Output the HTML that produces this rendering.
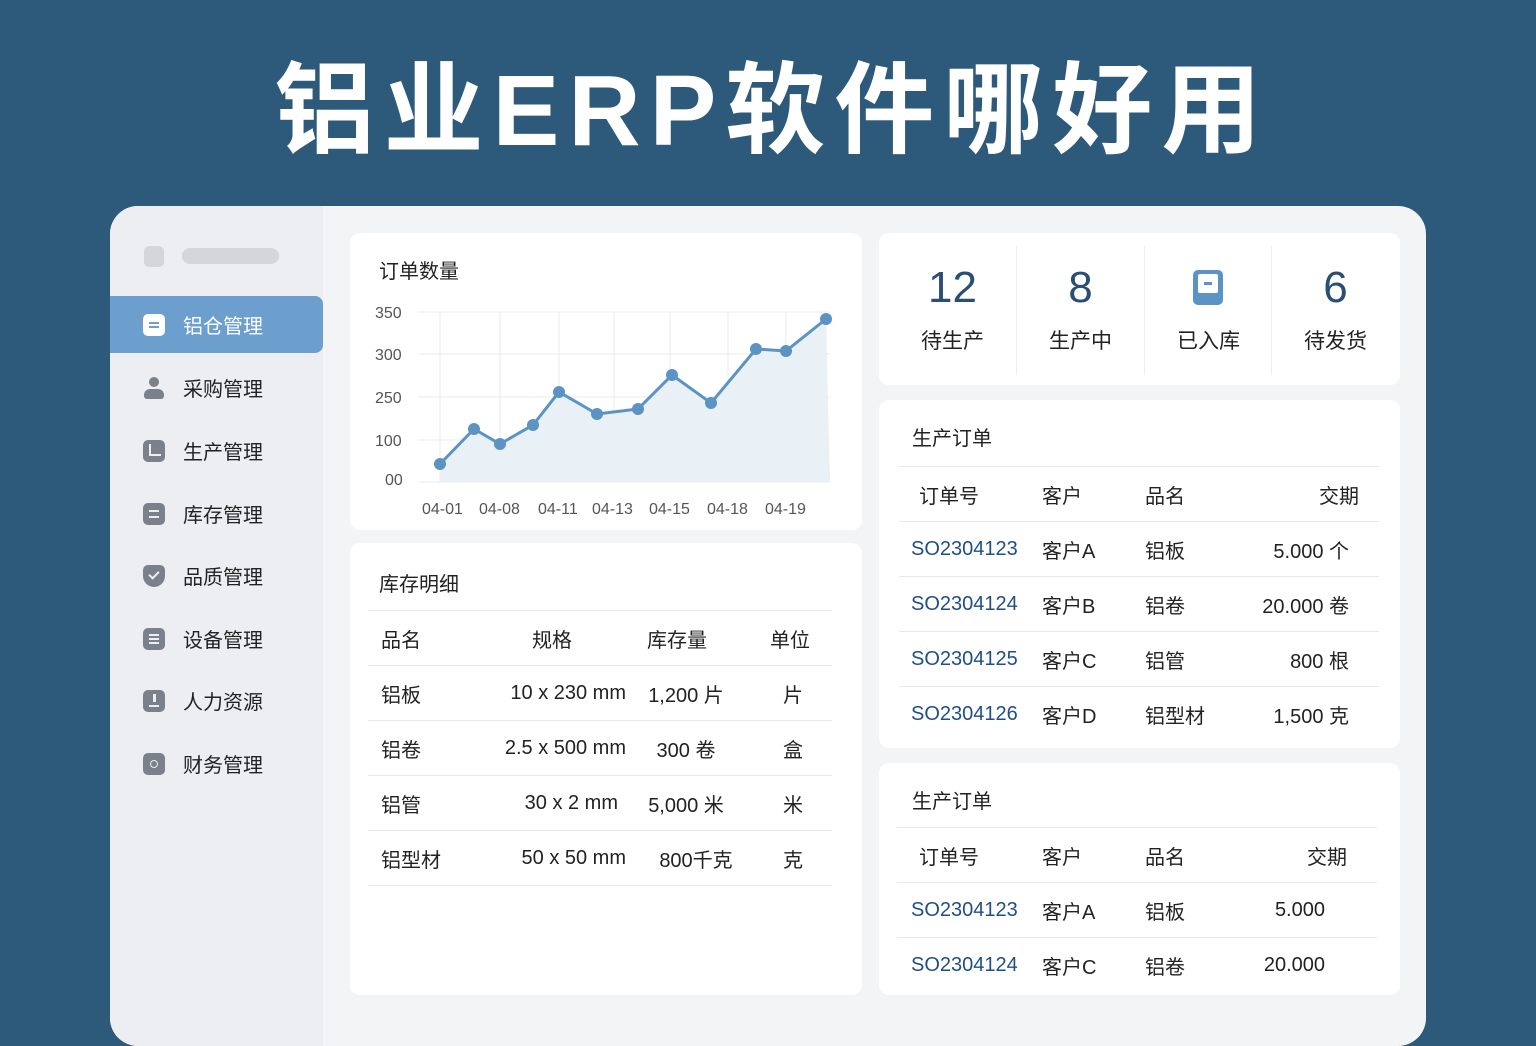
<!DOCTYPE html>
<html><head><meta charset="utf-8"><style>
*{margin:0;padding:0;box-sizing:border-box}
body{width:1536px;height:1024px;overflow:hidden;background:#2d5a7b;font-family:"Liberation Sans","Noto Sans CJK SC",sans-serif;position:relative;color:#222}
.title{position:absolute;top:46px;left:0;width:1536px;text-align:center;color:#fff;font-size:100px;font-weight:bold;letter-spacing:9px;line-height:130px;padding-left:9px}
.panel{position:absolute;left:110px;top:206px;width:1316px;height:840px;background:#f3f4f6;border-radius:28px;overflow:hidden}
.side{position:absolute;left:0;top:0;width:213px;height:100%;background:#eceef1}
.card{position:absolute;background:#fff;border-radius:10px}
.abs{position:absolute}
.nav{position:absolute;left:0;width:213px;height:57px;display:flex;align-items:center;font-size:20px;color:#222}
.nav .ic{width:22px;height:22px;border-radius:5px;background:#7b818a;margin-left:33px;margin-right:18px;position:relative}
.nav .ic i{position:absolute;left:6px;width:10px;height:2px;background:#eceef1}
.nav.on{background:#6c9fce;color:#fff;border-radius:0 8px 8px 0}
.nav.on .ic{background:#fff}
table{border-collapse:collapse;font-size:20px;table-layout:fixed}
td{height:55px;border-bottom:1px solid #e6e8eb;white-space:nowrap}
.blue{color:#1f4f86}
.num{font-size:44px;color:#2b4f73;text-align:center;width:127px;top:30px;position:absolute}
</style></head><body>
<div class="title">铝业ERP软件哪好用</div>
<div class="panel">
 <div class="side">
  <div class="abs" style="left:34px;top:40px;width:20px;height:21px;border-radius:5px;background:#d4d6d9"></div>
  <div class="abs" style="left:72px;top:42px;width:97px;height:16px;border-radius:8px;background:#d4d6d9"></div>
  <div class="nav on" style="top:90px"><div class="ic"><i style="top:8px;background:#6c9fce"></i><i style="top:12px;background:#6c9fce"></i></div>铝仓管理</div>
  <div class="nav" style="top:153px"><div class="ic" style="background:none"><div class="abs" style="left:6px;top:0;width:10px;height:10px;border-radius:50%;background:#7b818a"></div><div class="abs" style="left:1px;top:12px;width:20px;height:10px;border-radius:6px 6px 3px 3px;background:#7b818a"></div></div>采购管理</div>
  <div class="nav" style="top:216px"><div class="ic"><div class="abs" style="left:6px;top:4px;width:12px;height:12px;border-left:2px solid #eceef1;border-bottom:2px solid #eceef1"></div></div>生产管理</div>
  <div class="nav" style="top:279px"><div class="ic"><i style="top:7px"></i><i style="top:13px"></i></div>库存管理</div>
  <div class="nav" style="top:341px"><div class="ic" style="border-radius:5px 5px 11px 11px"><div class="abs" style="left:6px;top:6px;width:10px;height:6px;border-left:2px solid #eceef1;border-bottom:2px solid #eceef1;transform:rotate(-45deg)"></div></div>品质管理</div>
  <div class="nav" style="top:404px"><div class="ic"><i style="top:6px"></i><i style="top:10px"></i><i style="top:14px"></i></div>设备管理</div>
  <div class="nav" style="top:466px"><div class="ic"><div class="abs" style="left:10px;top:4px;width:3px;height:8px;background:#eceef1"></div><i style="top:15px"></i></div>人力资源</div>
  <div class="nav" style="top:529px"><div class="ic"><div class="abs" style="left:7px;top:7px;width:8px;height:8px;border:1.5px solid #eceef1;border-radius:50%"></div></div>财务管理</div>
 </div>
 <div class="card" style="left:240px;top:27px;width:512px;height:297px">
  <div class="abs" style="left:29px;top:22px;font-size:20px">订单数量</div>
  <svg class="abs" style="left:0;top:0" width="512" height="297">
   <g stroke="#e8ebee" stroke-width="1">
    <line x1="68" y1="79" x2="480" y2="79"/><line x1="68" y1="121" x2="480" y2="121"/><line x1="68" y1="164" x2="480" y2="164"/><line x1="68" y1="207" x2="480" y2="207"/><line x1="68" y1="249" x2="480" y2="249"/>
    <line x1="90" y1="79" x2="90" y2="249"/><line x1="150" y1="79" x2="150" y2="249"/><line x1="209" y1="79" x2="209" y2="249"/><line x1="264" y1="79" x2="264" y2="249"/><line x1="320" y1="79" x2="320" y2="249"/><line x1="378" y1="79" x2="378" y2="249"/><line x1="436" y1="79" x2="436" y2="249"/>
   </g>
   <polygon fill="#e9f0f6" points="90,231 124,196 150,211 183,192 209,159 247,181 288,176 322,142 361,170 406,116 436,118 476,86 480,249 90,249"/>
   <polyline fill="none" stroke="#5b93c4" stroke-width="3" points="90,231 124,196 150,211 183,192 209,159 247,181 288,176 322,142 361,170 406,116 436,118 476,86"/>
   <g fill="#5b93c4"><circle cx="90" cy="231" r="6"/><circle cx="124" cy="196" r="6"/><circle cx="150" cy="211" r="6"/><circle cx="183" cy="192" r="6"/><circle cx="209" cy="159" r="6"/><circle cx="247" cy="181" r="6"/><circle cx="288" cy="176" r="6"/><circle cx="322" cy="142" r="6"/><circle cx="361" cy="170" r="6"/><circle cx="406" cy="116" r="6"/><circle cx="436" cy="118" r="6"/><circle cx="476" cy="86" r="6"/></g>
   <g font-size="16" fill="#555" font-family="Liberation Sans,sans-serif">
    <text x="25" y="85">350</text><text x="25" y="127">300</text><text x="25" y="170">250</text><text x="25" y="213">100</text><text x="35" y="252">00</text>
    <text x="72" y="281">04-01</text><text x="129" y="281">04-08</text><text x="188" y="281">04-11</text><text x="242" y="281">04-13</text><text x="299" y="281">04-15</text><text x="357" y="281">04-18</text><text x="415" y="281">04-19</text>
   </g>
  </svg>
 </div>
 <div class="card" style="left:240px;top:337px;width:512px;height:452px">
  <div class="abs" style="left:29px;top:25px;font-size:20px">库存明细</div>
  <table class="abs" style="left:18px;top:67px;width:464px;border-top:1px solid #e6e8eb">
   <col style="width:130px"><col style="width:128px"><col style="width:140px"><col style="width:66px">
   <tr><td style="padding-left:13px">品名</td><td style="text-align:right;padding-right:54px">规格</td><td style="text-align:center;padding-right:38px">库存量</td><td style="text-align:center;padding-right:18px">单位</td></tr>
   <tr><td style="padding-left:13px">铝板</td><td style="text-align:right">10 x 230 mm</td><td style="text-align:center;padding-right:20px">1,200 片</td><td style="text-align:center;padding-right:12px">片</td></tr>
   <tr><td style="padding-left:13px">铝卷</td><td style="text-align:right">2.5 x 500 mm</td><td style="text-align:center;padding-right:20px">300 卷</td><td style="text-align:center;padding-right:12px">盒</td></tr>
   <tr><td style="padding-left:13px">铝管</td><td style="text-align:right;padding-right:8px">30 x 2 mm</td><td style="text-align:center;padding-right:20px">5,000 米</td><td style="text-align:center;padding-right:12px">米</td></tr>
   <tr><td style="padding-left:13px">铝型材</td><td style="text-align:right">50 x 50 mm</td><td style="text-align:center;padding-right:0">800千克</td><td style="text-align:center;padding-right:12px">克</td></tr>
  </table>
 </div>
 <div class="card" style="left:769px;top:27px;width:521px;height:152px">
  <div class="abs" style="left:137px;top:12px;width:1px;height:130px;background:#eceef0"></div>
  <div class="abs" style="left:265px;top:12px;width:1px;height:130px;background:#eceef0"></div>
  <div class="abs" style="left:392px;top:12px;width:1px;height:130px;background:#eceef0"></div>
  <div class="num" style="left:10px">12</div>
  <div class="num" style="left:138px">8</div>
  <div class="abs" style="left:314px;top:37px;width:30px;height:35px;border-radius:5px;background:#5b93c4"><div class="abs" style="left:5px;top:4px;width:20px;height:19px;background:#fff;border-radius:2px"></div><div class="abs" style="left:11px;top:12px;width:8px;height:3px;background:#5b93c4"></div></div>
  <div class="num" style="left:393px">6</div>
  <div class="abs" style="left:10px;top:92px;width:127px;text-align:center;font-size:21px">待生产</div>
  <div class="abs" style="left:138px;top:92px;width:127px;text-align:center;font-size:21px">生产中</div>
  <div class="abs" style="left:266px;top:92px;width:127px;text-align:center;font-size:21px">已入库</div>
  <div class="abs" style="left:393px;top:92px;width:127px;text-align:center;font-size:21px">待发货</div>
 </div>
 <div class="card" style="left:769px;top:194px;width:521px;height:348px">
  <div class="abs" style="left:33px;top:22px;font-size:20px">生产订单</div>
  <table class="abs" style="left:20px;top:66px;width:480px;border-top:1px solid #e6e8eb">
   <col style="width:143px"><col style="width:103px"><col style="width:90px"><col>
   <tr><td style="padding-left:20px">订单号</td><td>客户</td><td>品名</td><td style="text-align:right;padding-right:20px">交期</td></tr>
   <tr><td class="blue" style="padding-left:12px">SO2304123</td><td>客户A</td><td>铝板</td><td style="text-align:right;padding-right:30px">5.000 个</td></tr>
   <tr><td class="blue" style="padding-left:12px">SO2304124</td><td>客户B</td><td>铝卷</td><td style="text-align:right;padding-right:30px">20.000 卷</td></tr>
   <tr><td class="blue" style="padding-left:12px">SO2304125</td><td>客户C</td><td>铝管</td><td style="text-align:right;padding-right:30px">800 根</td></tr>
   <tr><td class="blue" style="padding-left:12px;border:none">SO2304126</td><td style="border:none">客户D</td><td style="border:none">铝型材</td><td style="text-align:right;padding-right:30px;border:none">1,500 克</td></tr>
  </table>
 </div>
 <div class="card" style="left:769px;top:557px;width:521px;height:232px">
  <div class="abs" style="left:33px;top:22px;font-size:20px">生产订单</div>
  <table class="abs" style="left:18px;top:64px;width:480px;border-top:1px solid #e6e8eb">
   <col style="width:145px"><col style="width:103px"><col style="width:90px"><col>
   <tr><td style="padding-left:22px">订单号</td><td>客户</td><td>品名</td><td style="text-align:right;padding-right:30px">交期</td></tr>
   <tr><td class="blue" style="padding-left:14px">SO2304123</td><td>客户A</td><td>铝板</td><td style="text-align:right;padding-right:52px">5.000</td></tr>
   <tr><td class="blue" style="padding-left:14px;border:none">SO2304124</td><td style="border:none">客户C</td><td style="border:none">铝卷</td><td style="text-align:right;padding-right:52px;border:none">20.000</td></tr>
  </table>
 </div>
</div>
</body></html>
